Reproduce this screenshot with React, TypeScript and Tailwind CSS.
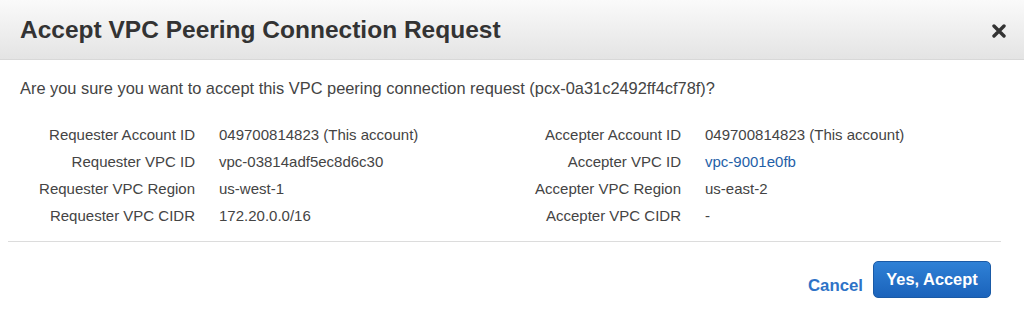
import React from 'react';

const LEFT = [
  { label: 'Requester Account ID', value: '049700814823 (This account)' },
  { label: 'Requester VPC ID', value: 'vpc-03814adf5ec8d6c30' },
  { label: 'Requester VPC Region', value: 'us-west-1' },
  { label: 'Requester VPC CIDR', value: '172.20.0.0/16' },
];

const RIGHT = [
  { label: 'Accepter Account ID', value: '049700814823 (This account)' },
  { label: 'Accepter VPC ID', value: 'vpc-9001e0fb', link: true },
  { label: 'Accepter VPC Region', value: 'us-east-2' },
  { label: 'Accepter VPC CIDR', value: '-' },
];

type Row = { label: string; value: string; link?: boolean };

const DetailColumn = ({ rows }: { rows: Row[] }) => (
  <div className="grid grid-cols-[175px_1fr] gap-x-6">
    {rows.map((r) => (
      <React.Fragment key={r.label}>
        <div className="text-right text-[15px] leading-[27px] text-[#444] whitespace-nowrap">{r.label}</div>
        <div className={`text-[15px] leading-[27px] whitespace-nowrap ${r.link ? 'text-[#1f5fa8]' : 'text-[#444]'}`}>{r.value}</div>
      </React.Fragment>
    ))}
  </div>
);

export default function App() {
  return (
    <div className="w-[1024px] h-[315px] bg-white font-['Liberation_Sans',Arial,sans-serif] overflow-hidden">
      <div className="h-[60px] pt-[2px] flex items-center justify-between pl-5 pr-4 bg-gradient-to-b from-[#fafafa] to-[#e4e4e4] border-b border-[#d8d8d8]">
        <h1 className="text-[24.5px] font-bold text-[#333]">Accept VPC Peering Connection Request</h1>
        <button className="text-[#333] mr-[2px]" aria-label="Close">
          <svg width="14" height="14" viewBox="0 0 14 14">
            <path d="M2 2 L12 12 M12 2 L2 12" stroke="#333" strokeWidth="3.4" strokeLinecap="round" />
          </svg>
        </button>
      </div>

      <div className="px-5 pt-[18px]">
        <p className="text-[16.4px] text-[#444] leading-[20px] whitespace-nowrap">
          Are you sure you want to accept this VPC peering connection request (pcx-0a31c2492ff4cf78f)?
        </p>
        <div className="grid grid-cols-[486px_486px] mt-[23px]">
          <DetailColumn rows={LEFT} />
          <DetailColumn rows={RIGHT} />
        </div>
      </div>

      <div className="mx-2 mt-[12px] w-[993px] border-t border-[#dcdcdc]" />

      <div className="flex justify-end items-end gap-[10px] pr-[33px] pt-[19px]">
        <button className="text-[16.8px] font-bold text-[#2e73c7] leading-[24px]">Cancel</button>
        <button className="h-[37px] w-[118px] rounded-[5px] border border-[#1a5aa6] bg-gradient-to-b from-[#2f81d6] to-[#1b63bb] text-white text-[16.4px] font-bold">
          Yes, Accept
        </button>
      </div>
    </div>
  );
}
